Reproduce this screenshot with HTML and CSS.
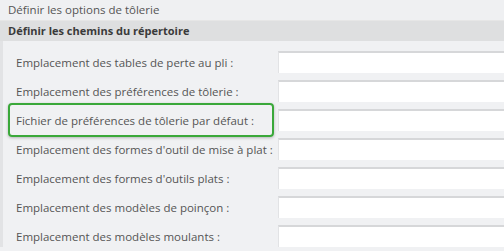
FILE: index.html
```html
<!DOCTYPE html>
<html lang="fr">
<head>
  <meta charset="UTF-8" />
  <title>Options de tôlerie</title>
  <link rel="stylesheet" href="styles.css">
</head>
<body>
  <div class="title-row">Définir les options de tôlerie</div>
  <div class="section-row">Définir les chemins du répertoire</div>

  <div class="panel">
    <div class="field">
      <label>Emplacement des tables de perte au pli :</label>
      <input type="text" />
    </div>
    <div class="field">
      <label>Emplacement des préférences de tôlerie :</label>
      <input type="text" />
    </div>
    <div class="field active">
      <label>Fichier de préférences de tôlerie par défaut :</label>
      <input type="text" />
    </div>
    <div class="field">
      <label>Emplacement des formes d'outil de mise à plat :</label>
      <input type="text" />
    </div>
    <div class="field">
      <label>Emplacement des formes d'outils plats :</label>
      <input type="text" />
    </div>
    <div class="field">
      <label>Emplacement des modèles de poinçon :</label>
      <input type="text" />
    </div>
    <div class="field">
      <label>Emplacement des modèles moulants :</label>
      <input type="text" />
    </div>
  </div>
  <div class="footer"></div>
</body>
</html>
```

FILE: styles.css
```css
body {
  margin: 0;
  font-family: 'Open Sans', 'Noto Sans', sans-serif;
  background-color: #f0f1f3;
  overflow: hidden;
}
.title-row {
  height: 20px;
  line-height: 20px;
  padding-left: 8px;
  font-size: 11.5px;
  color: #555;
  background: #eff0f2;
}
.section-row {
  height: 20px;
  line-height: 20px;
  padding-left: 8px;
  font-size: 11px;
  font-weight: bold;
  color: #3a3a3a;
  background: #dedfe0;
  border-top: 1px solid #e6e6e6;
}
.panel {
  border-left: 3px solid #e2e3e5;
  padding-top: 9px;
  background: #f0f1f3;
}
.field {
  display: flex;
  align-items: center;
  height: 23px;
  margin-bottom: 6px;
}
.field label {
  flex: 0 0 262px;
  padding-left: 13px;
  padding-top: 1px;
  font-size: 11.5px;
  color: #555;
  white-space: nowrap;
  position: relative;
}
.field input {
  flex: 1;
  min-width: 0;
  height: 22px;
  box-sizing: border-box;
  margin: 0;
  border: none;
  border-top: 2px solid #d6d7d9;
  border-left: 1px solid #e2e3e5;
  background: #fff;
}
.field.active label::before {
  content: "";
  position: absolute;
  left: 5px;
  right: 4px;
  top: -9px;
  bottom: -9px;
  border: 2px solid #3aa83a;
  border-radius: 4px;
  box-shadow: 0 1px 3px rgba(0, 0, 0, 0.25);
}
.footer {
  height: 6px;
  background: #dedfe0;
}
```
